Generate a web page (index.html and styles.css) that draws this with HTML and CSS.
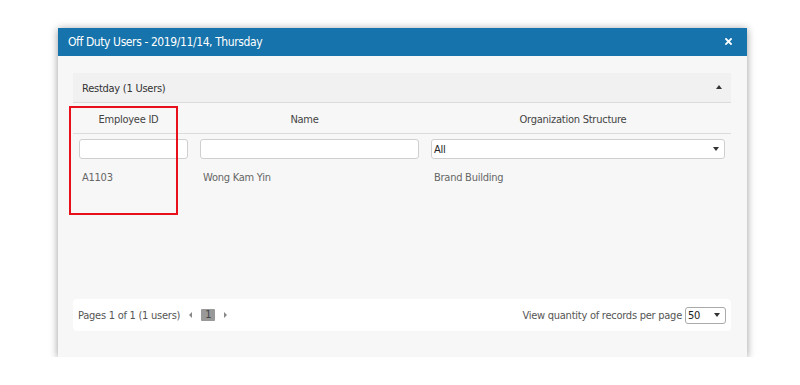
FILE: index.html
```html
<!DOCTYPE html>
<html lang="en">
<head>
    <meta charset="UTF-8">
    <meta name="viewport" content="width=device-width, initial-scale=1.0">
    <title>Off Duty Users</title>
    <link rel="stylesheet" href="styles.css">
</head>
<body>
    <div class="stage">
        <div class="modal">
            <div class="modal-header">
                <span class="modal-title">Off Duty Users - 2019/11/14, Thursday</span>
                <svg class="modal-close" width="7" height="7" viewBox="0 0 7 7">
                    <path d="M1 1L6 6M6 1L1 6" stroke="#fff" stroke-width="1.8" stroke-linecap="square"/>
                </svg>
            </div>
            <div class="modal-body">
                <div class="panel">
                    <div class="panel-heading">
                        <span>Restday (1 Users)</span>
                        <span class="caret-up"></span>
                    </div>
                    <div class="table-area">
                        <table class="grid">
                            <colgroup>
                                <col class="col-id">
                                <col class="col-name">
                                <col class="col-org">
                            </colgroup>
                            <thead>
                                <tr class="head-row">
                                    <th>Employee ID</th>
                                    <th>Name</th>
                                    <th>Organization Structure</th>
                                </tr>
                                <tr class="filter-row">
                                    <td><input type="text" class="filter-input"></td>
                                    <td><input type="text" class="filter-input"></td>
                                    <td>
                                        <div class="filter-select">
                                            <span>All</span>
                                            <span class="caret-down"></span>
                                        </div>
                                    </td>
                                </tr>
                            </thead>
                            <tbody>
                                <tr class="data-row">
                                    <td>A1103</td>
                                    <td>Wong Kam Yin</td>
                                    <td>Brand Building</td>
                                </tr>
                            </tbody>
                        </table>
                    </div>
                    <div class="pager">
                        <div class="pager-left">
                            <span>Pages 1 of 1 (1 users)</span>
                            <span class="arrow-left"></span>
                            <span class="page-num">1</span>
                            <span class="arrow-right"></span>
                        </div>
                        <div class="pager-right">
                            <span>View quantity of records per page</span>
                            <div class="page-size">
                                <span>50</span>
                                <span class="caret-down"></span>
                            </div>
                        </div>
                    </div>
                    <div class="highlight"></div>
                </div>
            </div>
        </div>
    </div>
</body>
</html>
```

FILE: styles.css
```css
body {
    margin: 0;
    background: #ffffff;
    font-family: "Liberation Sans Narrow", "DejaVu Sans Condensed", Roboto, sans-serif;
    font-size: 11px;
    letter-spacing: -0.25px;
    color: #444;
}

.stage {
    padding: 28px 0 0 58px;
}

.modal {
    width: 689px;
    height: 329px;
    background: #f7f7f7;
    box-shadow: 0 1px 8px rgba(0, 0, 0, 0.4);
    display: flex;
    flex-direction: column;
}

.modal-header {
    height: 28px;
    background: #1673ab;
    color: #fff;
    display: flex;
    align-items: center;
    justify-content: space-between;
    padding: 0 15px 0 10px;
    flex-shrink: 0;
}

.modal-title {
    font-size: 12px;
    letter-spacing: -0.4px;
}

.modal-close {
    display: block;
    margin-top: -1px;
}

.modal-body {
    padding: 17px 16px 26px 15px;
    flex: 1;
    display: flex;
}

.panel {
    position: relative;
    flex: 1;
    display: flex;
    flex-direction: column;
}

.panel-heading {
    height: 30px;
    background: #f1f1f1;
    border-bottom: 1px solid #dcdcdc;
    display: flex;
    align-items: center;
    justify-content: space-between;
    padding: 1px 9px 0 9px;
    color: #333;
    box-sizing: border-box;
}

.caret-up {
    width: 0;
    height: 0;
    margin-top: -2px;
    border-left: 3px solid transparent;
    border-right: 3px solid transparent;
    border-bottom: 4px solid #333;
}

.caret-down {
    width: 0;
    height: 0;
    border-left: 3px solid transparent;
    border-right: 3px solid transparent;
    border-top: 4px solid #333;
}

.table-area {
    flex: 1;
}

.grid {
    width: 100%;
    border-collapse: collapse;
    table-layout: fixed;
}

.col-id {
    width: 121px;
}

.col-name {
    width: 231px;
}

.head-row th {
    height: 27px;
    font-weight: normal;
    color: #444;
    border-bottom: 1px solid #dcdcdc;
    padding: 3px 10px 0 0;
}

.filter-row td {
    padding: 5px 6px 0;
}

.filter-input {
    display: block;
    width: 100%;
    height: 20px;
    box-sizing: border-box;
    border: 1px solid #cfcfcf;
    border-radius: 3px;
    background: #fff;
    margin: 0;
}

.filter-select {
    height: 20px;
    box-sizing: border-box;
    border: 1px solid #cfcfcf;
    border-radius: 3px;
    background: #fff;
    display: flex;
    align-items: center;
    justify-content: space-between;
    padding: 0 5px 0 2px;
    color: #222;
}

.data-row td {
    padding: 12px 9px;
    color: #666;
}

.pager {
    height: 32px;
    background: #fff;
    border-radius: 4px;
    display: flex;
    align-items: center;
    justify-content: space-between;
    padding: 0 5px;
    color: #555;
}

.pager-left {
    display: flex;
    align-items: center;
}

.arrow-left {
    margin-left: 9px;
    border-top: 3px solid transparent;
    border-bottom: 3px solid transparent;
    border-right: 3px solid #888;
}

.arrow-right {
    border-top: 3px solid transparent;
    border-bottom: 3px solid transparent;
    border-left: 3px solid #888;
}

.page-num {
    margin: 0 9px;
    width: 14px;
    height: 12px;
    line-height: 12px;
    text-align: center;
    background: #999;
    color: #444;
    border-radius: 1px;
}

.pager-right {
    display: flex;
    align-items: center;
    gap: 3px;
}

.page-size {
    width: 41px;
    height: 17px;
    box-sizing: border-box;
    border: 1px solid #aaa;
    border-radius: 3px;
    display: flex;
    align-items: center;
    justify-content: space-between;
    padding: 0 5px 0 2px;
    color: #222;
}

.highlight {
    position: absolute;
    left: -4px;
    top: 33px;
    width: 109px;
    height: 109px;
    box-sizing: border-box;
    border: 2px solid #e8111b;
}
```
